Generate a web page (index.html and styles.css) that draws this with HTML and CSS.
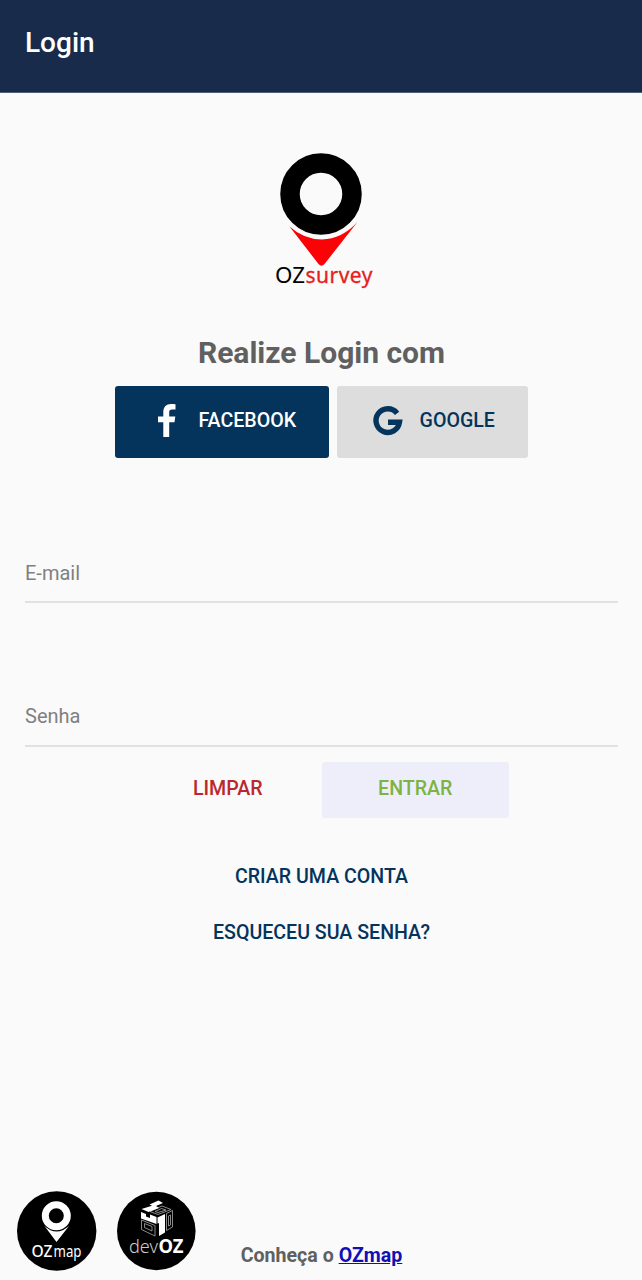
FILE: index.html
```html
<!DOCTYPE html>
<html lang="pt-BR">
<head>
<meta charset="UTF-8">
<meta name="viewport" content="width=device-width, initial-scale=1.0">
<title>Login</title>
<link rel="stylesheet" href="styles.css">
</head>
<body>
<header class="toolbar">
	<h1>Login</h1>
</header>
<main>
	<svg class="logo" viewBox="266 150 110 140" role="img" aria-label="OZsurvey">
		<circle cx="321" cy="194" r="31" fill="none" stroke="#000" stroke-width="19.5"/>
		<path d="M289.500 226.500Q304 239.500 322 239.500Q342 239 357.500 222L324.500 264Q321.500 267.500 318.500 264Z" fill="#fb0207"/>
		<text class="logo-text" x="275" y="282.5" textLength="30" lengthAdjust="spacingAndGlyphs">OZ</text>
		<text class="logo-text red" x="305.5" y="282.5" textLength="67">survey</text>
	</svg>
	<h2>Realize Login com</h2>
	<div class="social">
		<button class="btn facebook">
			<svg width="18" height="33" viewBox="0 0 18 33"><path d="M5.3 33V18.2H0V12.6H5.3V8.2C5.3 2.8 8.4 0 13 0C15 0 16.7.2 17.5.3V5.6H14.2C11.7 5.6 11.2 6.8 11.2 8.7V12.6H17.3L16.5 18.2H11.2V33Z" fill="#fff"/></svg>
			<span>FACEBOOK</span>
		</button>
		<button class="btn google">
			<svg width="29" height="30" viewBox="0 0 29 30"><path d="M23.100 7.300A11.800 11.800 0 1 0 25.500 16.200H14" fill="none" stroke="#04345c" stroke-width="5.400"/></svg>
			<span>GOOGLE</span>
		</button>
	</div>
	<form onsubmit="return false">
		<input class="field" type="email" placeholder="E-mail" aria-label="E-mail">
		<input class="field" type="password" placeholder="Senha" aria-label="Senha">
		<div class="actions">
			<button class="btn clear" type="reset">LIMPAR</button>
			<button class="btn enter" type="submit">ENTRAR</button>
		</div>
	</form>
	<button class="btn link">CRIAR UMA CONTA</button>
	<button class="btn link">ESQUECEU SUA SENHA?</button>
</main>
<footer>
	<div class="brands">
		<svg width="80" height="80" viewBox="0 0 80 80" role="img" aria-label="OZmap">
			<circle cx="39.7" cy="40" r="39.7"/>
			<circle cx="39.3" cy="24.8" r="11" fill="none" stroke="#fff" stroke-width="7"/>
			<path d="M27.500 35Q39.500 46 52 35L39.500 51Z" fill="#fff"/>
			<text class="brand-text medium" x="14.5" y="65.5" textLength="21" lengthAdjust="spacingAndGlyphs">OZ</text>
			<text class="brand-text" x="36.5" y="65.5" textLength="28" lengthAdjust="spacingAndGlyphs">map</text>
		</svg>
		<svg width="80" height="80" viewBox="0 0 80 80" role="img" aria-label="devOZ">
			<circle cx="39.3" cy="40" r="39.3"/>
			<!-- cube: top, left and right faces -->
			<g fill="none" stroke="#999" stroke-width=".9">
				<path d="M45 15L54 18.500L41 23.500L33 20.500ZM44.500 17.500L49 19L41 21.500L38 20.500Z"/>
				<path d="M24.500 29L38 34.500V45L24.500 38.500ZM27.500 32.500L35 35.500V40L27.500 36.500Z"/>
				<path d="M49.500 22.500L55.500 19.500V36L49.500 39.500ZM51.500 25L53.500 24V34L51.500 35Z"/>
			</g>
			<g fill="#fff">
				<path d="M32.500 13.500L41.500 9.500L46 12L39 15L42 17L31.500 21L24.500 18L35 14.700Z"/>
				<path d="M24 21L29 23V25.500L33 27V23.500L39.500 26V33L24 27.500Z"/>
				<path d="M40.500 26.500L48 23V41.500L42 45V32L40.500 32.500Z"/>
			</g>
			<text class="brand-text light" x="12" y="61.500" textLength="29" lengthAdjust="spacingAndGlyphs">dev</text>
			<text class="brand-text bold" x="41.500" y="61.500" textLength="25" lengthAdjust="spacingAndGlyphs">OZ</text>
		</svg>
	</div>
	<p>Conheça o <a href="#">OZmap</a></p>
</footer>
</body>
</html>
```
FILE: styles.css
```css
* {
	box-sizing: border-box;
}
body {
	margin: 0;
	min-height: 100vh;
	display: flex;
	flex-direction: column;
	background-color: #fafafa;
	font-family: Roboto, "Liberation Sans", sans-serif;
	font-size: 20px;
}

.toolbar {
	height: 93px;
	padding: 26px 25px 0;
	background-color: #182b4b;
	border-bottom: 1px solid #52607a;
}
.toolbar h1 {
	margin: 0;
	color: #fff;
	font-size: 28px;
	font-weight: 500;
	line-height: 34px;
}

main {
	flex: 1;
	display: flex;
	flex-direction: column;
	align-items: center;
	padding: 57px 24.5px 0;
}
.logo {
	display: block;
	width: 110px;
	height: 140px;
}
.logo-text {
	font-family: "Noto Sans", sans-serif;
	font-size: 21px;
}
.logo-text.red {
	fill: #e5201b;
	stroke: #e5201b;
	stroke-width: .3px;
}
h2 {
	margin: 45px 0 15px 1px;
	color: #606060;
	font-size: 30px;
	font-weight: 700;
	line-height: 36px;
}

.btn {
	display: flex;
	align-items: center;
	justify-content: center;
	height: 56px;
	padding: 0 0 4px;
	border: 0;
	border-radius: 3px;
	background: none;
	font: 500 19.6px Roboto, "Liberation Sans", sans-serif;
}
.btn svg {
	overflow: visible;
}
.social {
	display: flex;
	gap: 8px;
	margin-left: 1px;
}
.social .btn {
	height: 72px;
	padding-bottom: 3px;
}
.social span {
	margin-bottom: 1px;
}
.facebook {
	width: 213.5px;
	gap: 22px;
	padding-left: 11px;
	background-color: #04345c;
	color: #fff;
}
.google {
	width: 191.5px;
	gap: 17px;
	padding-left: 4px;
	background-color: #ddd;
	color: #04345c;
}

form {
	width: 100%;
	margin-top: 86px;
}
.field {
	display: block;
	width: 100%;
	height: 59px;
	margin-bottom: 85px;
	padding: 0 0 0 .5px;
	border: 0;
	border-bottom: 2px solid #e1e1e1;
	background: none;
	font: 20px Roboto, "Liberation Sans", sans-serif;
	outline: none;
}
.field + .field {
	margin-bottom: 15px;
	padding-bottom: 1px;
}
.field::placeholder {
	color: #808080;
}
.actions {
	display: flex;
	justify-content: center;
	margin: 0 0 32px 1px;
}
.actions .btn {
	width: 187.5px;
}
.clear {
	color: #b9282d;
}
.enter {
	background-color: #eeeefb;
	color: #7cb342;
}
.link {
	margin-left: 1px;
	color: #04345c;
}

footer {
	display: grid;
	grid-template-columns: 1fr auto 1fr;
	align-items: end;
	padding: 0 17px 9px;
}
.brands {
	display: flex;
	gap: 20px;
}
.brand-text {
	fill: #fff;
	font-family: "Noto Sans", sans-serif;
	font-size: 17px;
}
.brand-text.light {
	fill: #ccc;
	font-weight: 300;
	font-size: 19px;
}
.brand-text.medium {
	font-weight: 500;
}
.brand-text.bold {
	font-weight: 700;
	font-size: 19px;
}
footer p {
	margin: 0 0 3px 1px;
	color: #606060;
	font-size: 19.6px;
	font-weight: 700;
	line-height: 24px;
}
footer a {
	color: #1010b4;
}
```
